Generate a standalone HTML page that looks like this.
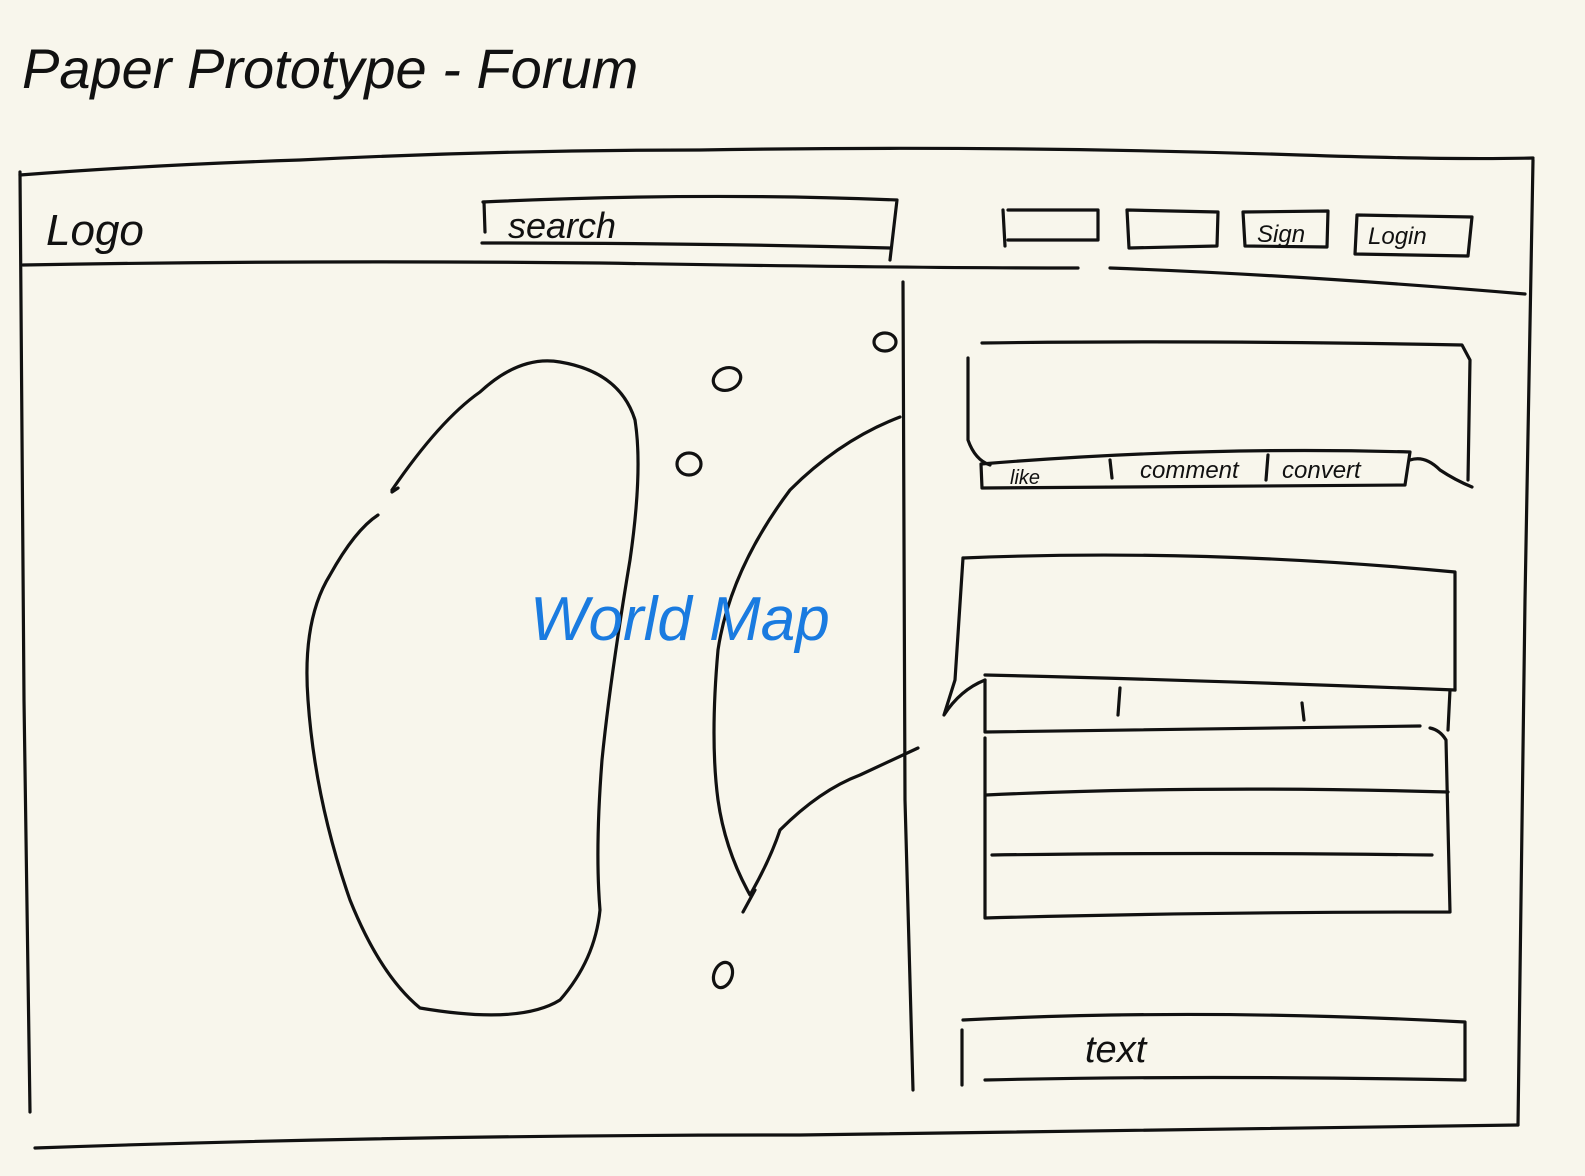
<!DOCTYPE html>
<html><head><meta charset="utf-8"><style>
html,body{margin:0;padding:0;background:#f8f6ec;}
svg{display:block}
text{font-family:"Liberation Sans",sans-serif;}
</style></head><body>
<svg width="1585" height="1176" viewBox="0 0 1585 1176" xmlns="http://www.w3.org/2000/svg">
<rect width="1585" height="1176" fill="#f8f6ec"/>
<g fill="none" stroke="#111" stroke-width="3.2" stroke-linecap="round" stroke-linejoin="round">
<!-- outer frame -->
<path d="M20 175 Q150 165 300 160 Q500 150 700 150 Q1000 145 1300 155 Q1450 160 1533 158"/>
<path d="M20 172 L24 700 L30 1112"/>
<path d="M1533 160 L1525 600 L1518 1125"/>
<path d="M35 1148 Q400 1135 800 1135 Q1200 1128 1518 1125"/>
<!-- header line -->
<path d="M23 265 Q300 260 600 263 Q900 268 1078 268"/>
<path d="M1110 268 Q1300 275 1525 294"/>
<!-- search box -->
<path d="M483 202 Q700 192 897 200 L890 260"/>
<path d="M484 202 L485 232"/>
<path d="M482 243 Q700 243 890 248"/>
<!-- small boxes -->
<path d="M1003 210 L1005 246 M1008 210 L1098 210 L1098 240 L1008 240"/>
<path d="M1127 210 L1218 212 L1217 246 L1129 248 Z"/>
<path d="M1243 212 L1328 211 L1327 247 L1245 246 Z"/>
<path d="M1357 215 L1472 217 L1468 256 L1355 254 Z"/>
<!-- vertical divider -->
<path d="M903 282 L905 800 L913 1090"/>
<!-- continents -->
<path d="M392 490 Q440 420 480 392 Q520 355 560 362 Q620 372 635 420 Q643 470 630 560 Q610 680 602 760 Q595 850 600 910 Q595 960 560 1000 Q520 1025 420 1008 Q380 975 350 900 Q315 800 308 700 Q302 620 330 575 Q355 530 378 515"/>
<path d="M900 417 Q840 440 790 490 Q730 570 718 650 Q710 740 718 800 Q725 850 750 895 Q770 860 780 830 Q820 790 860 775 L918 748"/>
<path d="M755 890 L743 912"/>
<path d="M398 488 L392 492"/>
<ellipse cx="727" cy="379" rx="14" ry="11" transform="rotate(-20 727 379)"/>
<ellipse cx="689" cy="464" rx="12" ry="11"/>
<ellipse cx="885" cy="342" rx="11" ry="9"/>
<ellipse cx="723" cy="975" rx="9" ry="13" transform="rotate(20 723 975)"/>
<!-- post 1 -->
<path d="M982 343 Q1200 340 1462 345 L1470 360 L1468 480"/>
<path d="M968 358 L968 440 Q975 460 990 465"/>
<path d="M981 464 Q1200 446 1410 452 L1405 485 L982 488 Z"/>
<path d="M1110 460 L1112 478 M1268 455 L1266 480"/>
<path d="M1410 460 Q1425 455 1440 470 Q1455 480 1472 487"/>
<!-- post 2 -->
<path d="M963 558 Q1200 548 1455 572 L1455 690"/>
<path d="M963 558 L955 680 L944 715 Q960 690 985 680"/>
<path d="M985 675 Q1200 680 1455 690"/>
<path d="M985 680 L985 732 Q1200 730 1420 726 M1450 690 L1448 730"/>
<path d="M1120 688 L1118 715 M1302 703 L1304 720"/>
<path d="M985 738 L985 918 Q1200 912 1450 912 L1446 740 Q1440 730 1430 728"/>
<path d="M986 795 Q1200 785 1448 792"/>
<path d="M992 855 Q1200 852 1432 855"/>
<!-- text box -->
<path d="M963 1020 Q1200 1008 1465 1022 L1465 1080"/>
<path d="M962 1030 L962 1085"/>
<path d="M985 1080 Q1200 1075 1465 1080"/>
</g>
<g fill="#111" font-style="italic">
<text x="22" y="88" font-size="56" font-weight="300" transform="scale(1,1)" style="font-family:'Liberation Sans Narrow','Liberation Sans',sans-serif">Paper Prototype - Forum</text>
<text x="46" y="245" font-size="44">Logo</text>
<text x="508" y="238" font-size="36">search</text>
<text x="1257" y="242" font-size="24">Sign</text>
<text x="1368" y="244" font-size="24">Login</text>
<text x="1010" y="484" font-size="20">like</text>
<text x="1140" y="478" font-size="24">comment</text>
<text x="1282" y="478" font-size="24">convert</text>
<text x="1085" y="1062" font-size="38">text</text>
</g>
<text x="530" y="640" font-size="62" fill="#1a7be0" font-style="italic" font-family="Liberation Sans, sans-serif" font-weight="300">World Map</text>
</svg>
</body></html>
